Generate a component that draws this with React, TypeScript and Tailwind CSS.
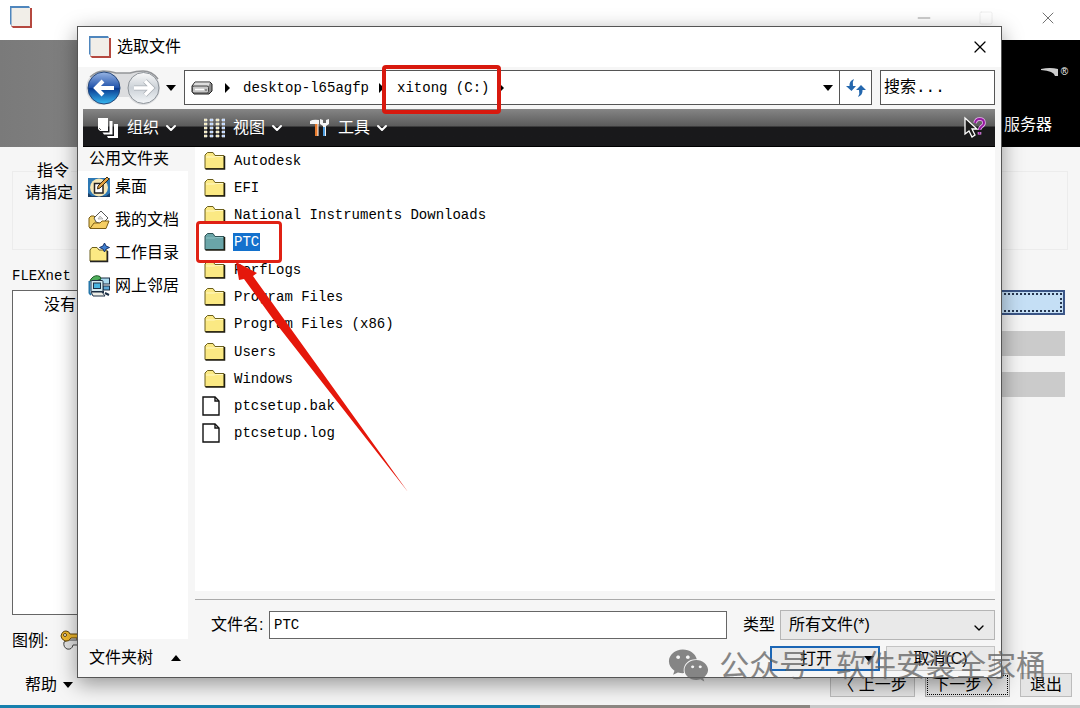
import React, { useState } from 'react';
import { ChevronDown, X, Minus, Square } from 'lucide-react';
import { FaWeixin } from 'react-icons/fa';

const entries = [
    { name: 'Autodesk', type: 'folder' },
    { name: 'EFI', type: 'folder' },
    { name: 'National Instruments Downloads', type: 'folder' },
    { name: 'PTC', type: 'folder' },
    { name: 'PerfLogs', type: 'folder' },
    { name: 'Program Files', type: 'folder' },
    { name: 'Program Files (x86)', type: 'folder' },
    { name: 'Users', type: 'folder' },
    { name: 'Windows', type: 'folder' },
    { name: 'ptcsetup.bak', type: 'file' },
    { name: 'ptcsetup.log', type: 'file' },
];

const AppIcon = () => (
    <svg width="22" height="22" viewBox="0 0 22 22" className="shrink-0">
        <path d="M2 2H22V22H3L1 20Z" fill="#b5483f" />
        <path d="M0 0H19L20 2H2V20L0 18Z" fill="#4f86bd" />
        <rect x="1.5" y="2" width="18.5" height="18" fill="#f1eee8" />
    </svg>
);

const FolderIcon = ({ selected }: { selected?: boolean }) => (
    <svg width="22" height="20" viewBox="0 0 22 20" className="shrink-0">
        <path
            d="M1 17.500V4L3.500 1.500H9L11 4.500H20V17.500Z"
            fill={selected ? '#6aa5a8' : '#fbe983'}
            stroke={selected ? '#2f5355' : '#6b5f1c'}
        />
        <path d="M2 6H10L12 5.500H19" fill="none" stroke={selected ? '#8cc2c4' : '#fff8c4'} />
        <path d="M1.500 18H20.500V5" fill="none" stroke="#1f1d10" strokeWidth="1.500" />
    </svg>
);

const FileIcon = () => (
    <svg width="18" height="20" viewBox="0 0 18 20" className="shrink-0">
        <path d="M1 1H13L17 5V19H1Z" fill="#fff" stroke="#111" strokeWidth="1.400" />
        <path d="M13 1V5H17" fill="none" stroke="#111" strokeWidth="1.400" />
    </svg>
);

const DesktopIcon = () => (
    <svg width="22" height="22" viewBox="0 0 22 22" className="shrink-0">
        <rect y="2" width="22" height="19" fill="#2d78b4" />
        <path d="M0 17L4 20H18L22 17V21H0Z" fill="#1b3f66" />
        <circle cx="11" cy="11.500" r="9" fill="#f5e6b4" />
        <path d="M6.500 7.500H15V17H6.500Z" fill="#fff" stroke="#222" strokeWidth="1.500" />
        <path d="M10 10L19 1L21 3L12 12L9.500 13Z" fill="#e0a040" stroke="#3a2a10" />
    </svg>
);

const DocumentsIcon = () => (
    <svg width="22" height="20" viewBox="0 0 22 20" className="shrink-0">
        <path d="M1 17V8L3 6H6L8 8H17V18H2Z" fill="#f2d267" stroke="#7a5c14" />
        <path d="M6 8L13 1L20 8L14 14L8 12Z" fill="#fff" stroke="#555" />
        <path d="M10 9L12 6L15 9Z" fill="#ddd" stroke="#999" strokeWidth=".6" />
        <path d="M2 18.500L6 13H12L14 11H21L18 18.500Z" fill="#f6ce62" stroke="#7a5c14" />
    </svg>
);

const WorkFolderIcon = () => (
    <svg width="22" height="20" viewBox="0 0 22 20" className="shrink-0">
        <path d="M2 18V7L4 4.500H9L11 7H19V18Z" fill="#fbe983" stroke="#6b5f1c" />
        <path d="M2 18.500H19.500V8" fill="none" stroke="#222" strokeWidth="1.500" />
        <path d="M16.500 0L18 3L21.500 4.500L18 6L16.500 9L15 6L11.500 4.500L15 3Z" fill="#3f7fd0" stroke="#16336b" />
    </svg>
);

const NetworkIcon = () => (
    <svg width="22" height="22" viewBox="0 0 22 22" className="shrink-0">
        <rect x="12" y="3" width="9.500" height="6" fill="#a9d8ee" stroke="#1d2f45" />
        <rect x="15" y="11" width="6.500" height="4" fill="#5ba7d6" stroke="#1d2f45" />
        <path d="M12 17H16M17 18L21 20" stroke="#1d2f45" strokeWidth="2" />
        <path d="M3 4Q7 -1 12 1.500L13 4L8 6H2Z" fill="#4fae5b" stroke="#1c5a28" />
        <rect x="3" y="5.500" width="12" height="11" rx="1" fill="#d5ebf0" stroke="#1d2f45" />
        <rect x="5.500" y="8" width="7" height="5.500" fill="#49b5e0" stroke="#1d2f45" />
        <path d="M3 17H14L17 21H5Z" fill="#eeeee6" stroke="#1d2f45" />
        <path d="M1.500 6V18L3 20" fill="none" stroke="#2677aa" strokeWidth="2" />
    </svg>
);

const DriveIcon = () => (
    <svg width="22" height="14" viewBox="0 0 22 14" className="shrink-0">
        <path d="M4 1H19L21 3V10L18 13H3L1 11V5Z" fill="#8a8a8a" stroke="#222" />
        <path d="M4 1.500H19L17.500 5H2Z" fill="#dedede" />
        <rect x="1.500" y="5" width="16" height="7" rx="1.500" fill="#c6c6c6" stroke="#444" />
        <path d="M4 8.500H13" stroke="#fff" strokeWidth="1.500" />
        <path d="M14 9H16" stroke="#555" />
    </svg>
);

const Triangle = ({ dir }: { dir: 'down' | 'up' | 'right' }) => (
    <svg width="10" height="10" viewBox="0 0 10 10" className="shrink-0">
        <path d={dir === 'down' ? 'M0 2H10L5 8Z' : dir === 'up' ? 'M0 8H10L5 2Z' : 'M2 0V10L7 5Z'} fill="#000" />
    </svg>
);

const HistoryButtons = () => (
    <svg width="74" height="36" viewBox="0 0 74 36">
        <defs>
            <linearGradient id="back" x2="0" y2="1">
                <stop offset="0" stopColor="#98b5e4" />
                <stop offset=".48" stopColor="#2455ac" />
                <stop offset=".52" stopColor="#093b91" />
                <stop offset="1" stopColor="#37b9f2" />
            </linearGradient>
            <linearGradient id="next" x2="0" y2="1">
                <stop offset="0" stopColor="#fafafa" />
                <stop offset=".5" stopColor="#cbd1d7" />
                <stop offset="1" stopColor="#f3f6f8" />
            </linearGradient>
        </defs>
        <path d="M17 1Q24 1 30 3H44Q50 1 57 1A17 17 0 0 1 57 35Q49 35 43 27H31Q25 35 17 35A17 17 0 0 1 17 1Z" fill="#dcdddf" />
        <path d="M4 7Q11 1 17 1Q24 1 30 3H44Q50 1 57 1Q66 1 72 9" fill="none" stroke="#939598" strokeWidth="1.500" />
        <circle cx="18" cy="18" r="16" fill="url(#back)" stroke="#244679" />
        <circle cx="57.500" cy="18" r="15.500" fill="url(#next)" stroke="#8d9399" />
        <path d="M28 18H10M17 11L10 18L17 25" fill="none" stroke="#fff" strokeWidth="4" />
        <path d="M48 18H66M59 11L66 18L59 25" fill="none" stroke="#a9afb5" strokeWidth="5" />
        <path d="M48 18H66M59 11L66 18L59 25" fill="none" stroke="#fff" strokeWidth="3.500" />
    </svg>
);

const OrganizeIcon = () => (
    <svg width="22" height="22" viewBox="0 0 22 22">
        <path d="M1 1H11V14H3L1 12Z" fill="#fff" />
        <path d="M12.500 4H15.500V17.500H7L5.500 15.500H12.500Z" fill="#fff" />
        <path d="M17 7H21V21H11L10 19H17Z" fill="#fff" />
        <path d="M2 11L4 13" stroke="#333" strokeWidth=".8" />
    </svg>
);

const ViewIcon = () => (
    <svg width="21" height="20" viewBox="0 0 21 20">
        {[1, 5, 9, 13, 17].map((y) => (
            <g key={y}>
                {[0, 6, 12, 18].map((x) => (
                    <path
                        key={x}
                        d={`M${x} ${y}h3v2h-3z`}
                        fill={(x + y) % 4 === 1 ? '#eee2a0' : '#9fc4ff'}
                        stroke="#fff"
                        strokeWidth=".6"
                    />
                ))}
            </g>
        ))}
    </svg>
);

const ToolsIcon = () => (
    <svg width="20" height="20" viewBox="0 0 20 20">
        <path d="M0 6V3Q3 1 9 2V6H3Z" fill="#f5f5f5" />
        <path d="M5 6H8V18H5Z" fill="#e77a2c" />
        <path d="M8 6V18" stroke="#fff" />
        <path d="M10 1V6L13 8V18H16V8L19 6V1L16 2V5H13V2Z" fill="#f5f5f5" />
        <path d="M13 9H15V18H13Z" fill="#4e9ee0" />
    </svg>
);

const HelpPointer = () => (
    <svg width="24" height="24" viewBox="0 0 24 24">
        <path d="M2 2V18L6 15L9 21L12 19L9 13H14Z" fill="#1c1c1c" stroke="#fff" strokeWidth="1.300" />
        <path d="M12 7Q13 3 16.500 3Q21 3 21 7Q21 9 18.500 10.500Q16.500 12 16.500 14M16.500 16V18.500" fill="none" stroke="#eab8f3" strokeWidth="3.500" />
        <path d="M12 7Q13 3 16.500 3Q21 3 21 7Q21 9 18.500 10.500Q16.500 12 16.500 14M16.500 16V18.500" fill="none" stroke="#96189f" strokeWidth="2" />
    </svg>
);

const KeyIcon = () => (
    <svg width="24" height="24" viewBox="0 0 24 24">
        <path d="M8 11H24V16H21V19H18V16H13Q12 21 7 20Q3 18 4 13Z" fill="#e5e5e5" stroke="#444" />
        <path d="M10 5H24V9H20V11H17V9H11Q9 13 5 12Q1 10 1 7Q2 2 6 2Q9 2 10 5Z" fill="#f0b92e" stroke="#5e430a" />
        <circle cx="5" cy="6" r="1.500" fill="#fff" stroke="#5e430a" />
    </svg>
);

const InstallerWindow = () => (
    <div className="flex min-h-screen flex-col bg-[#f6f6f6]">
        <header className="flex h-10 items-start justify-between bg-white pl-2.5 pr-[22px] pt-1.5">
            <AppIcon />
            <div className="flex items-center gap-11 pt-0.5">
                <button aria-label="最小化"><Minus className="h-5 w-5 text-[#888888]" strokeWidth={1} /></button>
                <button aria-label="最大化"><Square className="h-4 w-4 text-[#e8e8e8]" strokeWidth={1} /></button>
                <button aria-label="关闭"><X className="h-5 w-5 text-[#555555]" strokeWidth={1} /></button>
            </div>
        </header>

        <div className="flex h-[107px] bg-black text-white">
            <div className="w-40 bg-linear-to-r from-[#7a7a7a] to-[#858585]" />
            <div className="flex flex-1 flex-col items-end justify-between pb-2.5 pt-6">
                <div className="flex items-center gap-0.5 pr-3">
                    <svg width="18" height="8" viewBox="0 0 18 8">
                        <path d="M0 1Q9 -1 17 1V8H14Q13 3 0 2Z" fill="#ccc" />
                    </svg>
                    <span className="text-[10px] leading-4">®</span>
                </div>
                <h1 className="pr-7 text-base leading-6">服务器</h1>
            </div>
        </div>

        <main className="flex flex-1 flex-col px-3">
            <fieldset className="mt-3 h-[91px] border border-[#ececec] px-3">
                <legend className="ml-2.5 px-0.5 leading-6">指令</legend>
                <p className="leading-5">请指定</p>
            </fieldset>
            <div className="mt-4 flex flex-1 gap-4">
                <section className="flex flex-1 flex-col">
                    <h2 className="font-[Liberation_Mono,monospace] text-sm leading-5">FLEXnet</h2>
                    <div className="mt-1 flex-1 border border-[#666666] bg-white px-[31px] pt-1 leading-5">没有</div>
                </section>
                <div className="flex w-32 flex-col gap-4 pr-[3px] pt-6">
                    <button aria-label="添加" className="h-[25px] border-2 border-[#3b5687] bg-[#c5dff5] p-px">
                        <span className="block h-full border-2 border-dotted border-[#26364f]" />
                    </button>
                    <button aria-label="编辑" disabled className="h-[25px] bg-[#cbcbcb]" />
                    <button aria-label="删除" disabled className="h-[25px] bg-[#cbcbcb]" />
                </div>
            </div>
            <div className="mt-3.5 flex h-6 items-center gap-1">
                <span className="w-11">图例:</span>
                <KeyIcon />
            </div>
        </main>

        <footer className="mt-5 flex h-8 items-start justify-between pl-[25px] pr-2">
            <button className="flex items-center gap-1.5 leading-6">帮助 <Triangle dir="down" /></button>
            <div className="flex gap-2.5">
                <button className="h-6 w-[85px] border border-[#bcbcbc] bg-[#e5e5e5] leading-5">〈 上一步</button>
                <button className="h-6 w-[85px] border border-[#aaaaaa] bg-[#e5e5e5] p-px leading-5">
                    <span className="flex h-full items-center justify-center border border-dotted border-black">下一步 〉</span>
                </button>
                <button className="h-6 w-[52px] border border-[#bcbcbc] bg-[#e5e5e5] leading-5">退出</button>
            </div>
        </footer>
        <div className="flex h-[3px]">
            <div className="w-1/2 bg-[#1780ad]" />
            <div className="w-1/4 bg-[#8d8883]" />
            <div className="w-1/4 bg-[#c9c9c9]" />
        </div>
    </div>
);

const FileDialog = () => {
    const [selected, setSelected] = useState('PTC');

    return (
        <div
            role="dialog"
            aria-label="选取文件"
            className="absolute bottom-[30px] left-[77px] right-[78px] top-[26px] flex flex-col border border-[#555555] bg-[#f6f6f6] shadow-[0_6px_20px_rgba(0,0,0,0.4)]"
        >
            <div className="flex h-10 shrink-0 items-center gap-1.5 bg-white pl-[11px] pr-[11px]">
                <AppIcon />
                <h2 className="flex-1 leading-6">选取文件</h2>
                <button aria-label="关闭"><X className="h-5 w-5" strokeWidth={1.5} /></button>
            </div>

            {/* Address bar */}
            <div className="flex h-[41px] shrink-0 items-center pl-2 pr-1.5">
                <button aria-label="后退 / 前进"><HistoryButtons /></button>
                <button aria-label="历史记录" className="ml-1.5"><Triangle dir="down" /></button>
                <div className="ml-2 flex h-[35px] flex-1 items-center border border-[#555555] bg-white pl-1.5 font-[Liberation_Mono,monospace] text-sm">
                    <DriveIcon />
                    <span className="ml-2.5 mr-2.5"><Triangle dir="right" /></span>
                    <button>desktop-l65agfp</button>
                    <span className="ml-2 mr-2.5"><Triangle dir="right" /></span>
                    <button>xitong (C:)</button>
                    <span className="ml-2 flex-1"><Triangle dir="right" /></span>
                    <button aria-label="展开" className="pr-1.5"><Triangle dir="down" /></button>
                    <button aria-label="刷新" className="flex h-full w-8 items-center justify-center border-l border-[#555555]">
                        <svg width="20" height="20" viewBox="0 0 20 20">
                            <path d="M8 1Q3 3 3.500 8H0L5.500 13L10 8H7Q6 4 8 1Z" fill="#2467ae" />
                            <path d="M12 19Q17 17 16.500 12H20L15 7L10 12H13Q14 16 12 19Z" fill="#2467ae" />
                        </svg>
                    </button>
                </div>
                <input
                    aria-label="搜索"
                    placeholder="搜索..."
                    className="ml-2 h-[35px] w-[115px] border border-[#555555] bg-white px-[3px] font-[Liberation_Mono,Noto_Sans_CJK_SC,monospace] placeholder:text-black"
                />
            </div>

            {/* Toolbar */}
            <div className="ml-[5px] mr-1.5 mt-px flex h-[38px] shrink-0 items-center border-b border-black bg-linear-to-b from-[#858585] from-0% via-[#5c5c5c] via-45% to-[#19191b] to-50% pl-3.5 pr-2 text-white">
                <button className="flex items-center gap-2"><OrganizeIcon />组织<ChevronDown className="-ml-1 h-4 w-4" strokeWidth={3} /></button>
                <button className="ml-[25px] flex items-center gap-2"><ViewIcon />视图<ChevronDown className="-ml-1 h-4 w-4" strokeWidth={3} /></button>
                <button className="ml-[25px] flex items-center gap-2"><ToolsIcon />工具<ChevronDown className="-ml-1 h-4 w-4" strokeWidth={3} /></button>
                <button aria-label="帮助" className="ml-auto"><HelpPointer /></button>
            </div>

            <div className="flex min-h-0 flex-1">
                <aside className="flex w-[110px] shrink-0 flex-col">
                    <h3 className="pl-[11px] leading-6">公用文件夹</h3>
                    <nav className="flex flex-1 flex-col gap-[9px] bg-white pl-2.5 pt-1 leading-6">
                        <a href="#desktop" className="flex items-center gap-[5px]"><DesktopIcon />桌面</a>
                        <a href="#documents" className="flex items-center gap-[5px]"><DocumentsIcon />我的文档</a>
                        <a href="#work" className="flex items-center gap-[5px]"><WorkFolderIcon />工作目录</a>
                        <a href="#network" className="flex items-center gap-[5px]"><NetworkIcon />网上邻居</a>
                    </nav>
                    <button className="flex h-[38px] items-center gap-[18px] pl-[11px]">文件夹树 <Triangle dir="up" /></button>
                </aside>

                <div className="ml-[7px] mr-1.5 flex min-w-0 flex-1 flex-col">
                    <div className="flex-1 bg-white">
                        <ul className="grid h-[300px] auto-rows-fr font-[Liberation_Mono,monospace] text-sm">
                            {entries.map((entry) => (
                                <li key={entry.name} className="flex">
                                    <button onClick={() => setSelected(entry.name)} className="flex items-center pl-[7px]">
                                        <span className={entry.type === 'folder' ? 'w-[31px] pl-0.5' : 'w-[31px]'}>
                                            {entry.type === 'folder' ? <FolderIcon selected={entry.name === selected} /> : <FileIcon />}
                                        </span>
                                        <span className={entry.name === selected ? 'bg-[#1371cd] px-px leading-[18px] text-white' : 'px-px leading-[18px]'}>
                                            {entry.name}
                                        </span>
                                    </button>
                                </li>
                            ))}
                        </ul>
                    </div>

                    <div className="mt-2 border-t border-[#aaaaaa] pt-2.5">
                        <div className="flex items-center">
                            <label htmlFor="filename" className="w-[74px] pl-4">文件名:</label>
                            <input
                                id="filename"
                                defaultValue="PTC"
                                className="h-7 min-w-0 flex-1 border border-[#666666] bg-white px-1 font-[Liberation_Mono,monospace] text-sm"
                            />
                            <label htmlFor="filetype" className="ml-4 mr-[5px]">类型</label>
                            <div className="relative">
                                <select id="filetype" className="h-[30px] w-[215px] appearance-none border border-[#b5b5b5] bg-[#e9e9e9] px-2">
                                    <option>所有文件(*)</option>
                                </select>
                                <ChevronDown className="pointer-events-none absolute right-2 top-2.5 h-4 w-4" strokeWidth={2} />
                            </div>
                        </div>
                        <div className="mb-1.5 mt-1.5 flex justify-end gap-1.5">
                            <button className="flex h-[25px] w-[110px] items-center justify-end gap-8 border-2 border-[#1b66b5] bg-[#e9e9e9] pr-1">
                                打开 <Triangle dir="down" />
                            </button>
                            <button className="h-[25px] w-[109px] border border-[#c4c4c4] bg-[#e9e9e9] leading-5">取消(C)</button>
                        </div>
                    </div>
                </div>
            </div>
        </div>
    );
};

export default function App() {
    return (
        <div className="relative overflow-hidden font-[Liberation_Sans,Noto_Sans_CJK_SC,sans-serif] text-base text-black">
            <InstallerWindow />
            <FileDialog />

            {/* Highlights and arrow */}
            <div className="pointer-events-none absolute left-[382px] top-[65px] h-[49px] w-[119px] rounded border-4 border-[#d8190e]" />
            <div className="pointer-events-none absolute left-[196px] top-[221px] h-[42px] w-[86px] rounded border-[3px] border-[#e02114]" />
            <svg width="174" height="230" viewBox="0 0 174 230" className="pointer-events-none absolute left-[234px] top-[262px]">
                <path d="M2 0L23 11L19 14L52 60L174 230L44 64L10 17L5 18Z" fill="#e5170b" />
            </svg>

            {/* Channel watermark */}
            <div className="pointer-events-none absolute bottom-[22px] right-[34px] flex items-center gap-2.5 text-[#606060] opacity-75">
                <FaWeixin className="h-[41px] w-[41px]" />
                <span className="text-[30px] leading-10">公众号 · 软件安装全家桶</span>
            </div>
        </div>
    );
}
